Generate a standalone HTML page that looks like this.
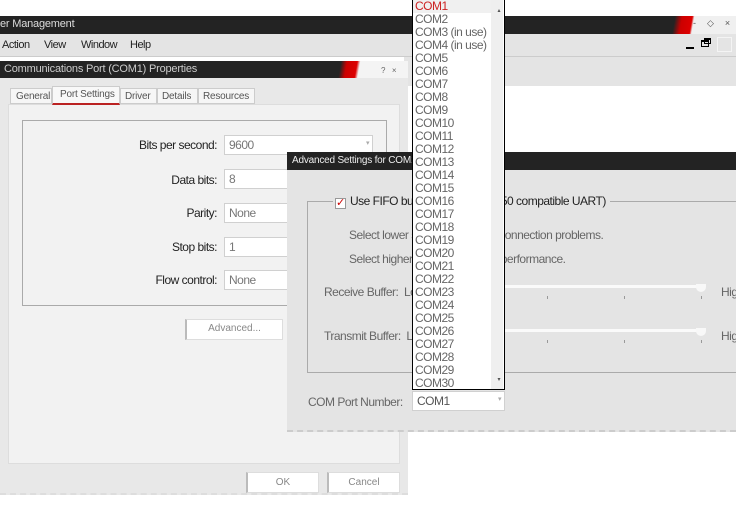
<!DOCTYPE html>
<html><head><style>
*{margin:0;padding:0;box-sizing:border-box}
body{width:736px;height:505px;background:#fff;position:relative;overflow:hidden;font-family:"Liberation Sans",sans-serif;font-size:12px;letter-spacing:-0.5px;color:#222}
.a{position:absolute}
.tb{background:#232323;color:#ddd;font-size:11px;letter-spacing:-0.2px}
.fld{position:absolute;background:#fff;border:1px solid #d0d0d0;color:#777;padding:2px 4px;height:20px;font-size:12px}
.lbl{position:absolute;text-align:right;font-size:12px;color:#222}
.btn{position:absolute;background:#fff;border:1px solid #ddd;border-left:2px solid #bbb;text-align:center;color:#888;font-size:10px;line-height:18px;letter-spacing:0}
.g{color:#666}
.tab{position:absolute;top:88px;height:16px;background:#f6f6f6;border:1px solid #ccc;font-size:10px;color:#555;padding:2px 0 0 4px;letter-spacing:-0.2px}
</style></head><body>
<!-- main window -->
<div class="a tb" style="left:0;top:16px;width:736px;height:18px;background:linear-gradient(100deg,#232323 0,#232323 665px,#c00 672px,#d00 682px,#f0f0f0 684px);padding:2px 0 0 0">er Management</div>
<div class="a" style="left:693px;top:18px;font-size:9px;color:#555;letter-spacing:11px">-◇×</div>
<div class="a" style="left:0;top:34px;width:736px;height:23px;background:#e4e4e4;border-bottom:1px solid #ccc"></div>
<div class="a" style="left:2px;top:39px;font-size:11px">Action</div>
<div class="a" style="left:44px;top:39px;font-size:11px">View</div>
<div class="a" style="left:81px;top:39px;font-size:11px">Window</div>
<div class="a" style="left:130px;top:39px;font-size:11px">Help</div>
<div class="a" style="left:686px;top:47px;width:8px;height:2px;background:#000"></div>
<div class="a" style="left:701px;top:40px;width:8px;height:7px;border:1px solid #000;border-top-width:2px"></div>
<div class="a" style="left:704px;top:38px;width:7px;height:6px;border:1px solid #000;border-top-width:2px"></div>
<div class="a" style="left:717px;top:37px;width:15px;height:15px;border:1px solid #f4f4f4"></div>
<div class="a" style="left:404px;top:57px;width:332px;height:29px;background:#e4e4e4"></div>
<!-- properties dialog -->
<div class="a" style="left:0;top:61px;width:408px;height:434px;background:#e8e8e8;border-bottom:2px dashed #ddd"></div>
<div class="a tb" style="left:0;top:61px;width:408px;height:17px;background:linear-gradient(100deg,#232323 0,#232323 336px,#c00 342px,#d00 352px,#f4f4f4 355px);padding:2px 0 0 4px;color:#ccc">Communications Port (COM1) Properties</div>
<div class="a" style="left:381px;top:66px;font-size:8px;color:#666">?&nbsp;&nbsp;&nbsp;&nbsp;×</div>
<div class="a" style="left:8px;top:104px;width:392px;height:360px;background:#f2f2f2;border:1px solid #ddd"></div>
<div class="tab" style="left:10px;width:42px;padding-left:5px">General</div>
<div class="tab" style="left:52px;top:86px;width:68px;height:19px;background:#f8f8f8;border-bottom:2px solid #b22;padding-left:7px">Port Settings</div>
<div class="tab" style="left:120px;width:37px">Driver</div>
<div class="tab" style="left:157px;width:41px">Details</div>
<div class="tab" style="left:198px;width:57px">Resources</div>
<div class="a" style="left:22px;top:120px;width:365px;height:186px;border:1px solid #aaa"></div>
<div class="lbl" style="left:60px;top:138px;width:157px">Bits per second:</div>
<div class="lbl" style="left:60px;top:173px;width:157px">Data bits:</div>
<div class="lbl" style="left:60px;top:206px;width:157px">Parity:</div>
<div class="lbl" style="left:60px;top:240px;width:157px">Stop bits:</div>
<div class="lbl" style="left:60px;top:273px;width:157px">Flow control:</div>
<div class="fld" style="left:224px;top:135px;width:149px">9600<span style="position:absolute;right:3px;top:3px;font-size:7px;color:#aaa">▾</span></div>
<div class="fld" style="left:224px;top:169px;width:70px">8</div>
<div class="fld" style="left:224px;top:203px;width:70px">None</div>
<div class="fld" style="left:224px;top:237px;width:70px">1</div>
<div class="fld" style="left:224px;top:270px;width:70px">None</div>
<div class="btn" style="left:185px;top:319px;width:98px;height:21px">Advanced...</div>
<div class="btn" style="left:246px;top:472px;width:73px;height:21px;line-height:19px">OK</div>
<div class="btn" style="left:327px;top:472px;width:73px;height:21px;line-height:19px">Cancel</div>
<!-- advanced dialog -->
<div class="a" style="left:287px;top:152px;width:449px;height:280px;background:#e4e4e4;border-bottom:2px dashed #ccc"></div>
<div class="a tb" style="left:287px;top:152px;width:449px;height:18px;padding:3px 0 0 5px;font-size:10px;color:#eee">Advanced Settings for COM1</div>
<div class="a" style="left:307px;top:201px;width:440px;height:172px;border:1px solid #aaa"></div>
<div class="a" style="left:333px;top:194px;background:#e4e4e4;padding:0 4px 0 2px;font-size:12px;color:#222"><span style="display:inline-block;width:11px;height:11px;border:1px solid #999;background:#fff;color:#c00;font-size:11px;line-height:9px;vertical-align:-1px;margin-right:4px;letter-spacing:0">✓</span>Use FIFO buffers (requires 16550 compatible UART)</div>
<div class="a g" style="left:349px;top:228px">Select lower settings to correct connection problems.</div>
<div class="a g" style="left:349px;top:252px">Select higher settings for faster performance.</div>
<div class="a g" style="left:324px;top:285px">Receive Buffer:&nbsp; Low</div>
<div class="a g" style="left:721px;top:285px">High</div>
<div class="a g" style="left:324px;top:329px">Transmit Buffer:&nbsp; Low</div>
<div class="a g" style="left:721px;top:329px">High</div>
<div class="a" style="left:430px;top:285px;width:275px;height:3px;background:#fafafa"></div>
<div class="a" style="left:430px;top:329px;width:275px;height:3px;background:#fafafa"></div>
<div class="a" style="left:696px;top:284px;width:10px;height:8px;background:#f8f8f8;border-radius:0 0 5px 5px"></div>
<div class="a" style="left:696px;top:328px;width:10px;height:8px;background:#f8f8f8;border-radius:0 0 5px 5px"></div>
<div class="a" style="left:547px;top:296px;width:1px;height:3px;background:#999"></div>
<div class="a" style="left:624px;top:296px;width:1px;height:3px;background:#999"></div>
<div class="a" style="left:701px;top:296px;width:1px;height:3px;background:#999"></div>
<div class="a" style="left:547px;top:340px;width:1px;height:3px;background:#999"></div>
<div class="a" style="left:624px;top:340px;width:1px;height:3px;background:#999"></div>
<div class="a" style="left:701px;top:340px;width:1px;height:3px;background:#999"></div>
<div class="a g" style="left:308px;top:395px">COM Port Number:</div>
<div class="fld" style="left:412px;top:391px;width:93px;height:20px;color:#555">COM1<span style="position:absolute;right:3px;top:3px;font-size:7px;color:#aaa">▾</span></div>
<!-- dropdown list -->
<div class="a" style="left:412px;top:-1px;width:93px;height:391px;background:#fff;border:1px solid #000;overflow:hidden;font-size:12px;line-height:13px;color:#666;padding-left:2px">
<div style="position:absolute;right:1px;top:0;width:12px;height:389px;background:#efefef"></div>
<div style="position:absolute;right:4px;top:5px;font-size:6px;color:#555">▴</div>
<div style="position:absolute;right:4px;top:374px;font-size:6px;color:#555">▾</div>
<div style="color:#c22;background:#f0f0f0;width:78px;margin-left:-2px;padding-left:2px">COM1</div>
<div>COM2</div><div>COM3 (in use)</div><div>COM4 (in use)</div><div>COM5</div><div>COM6</div><div>COM7</div><div>COM8</div><div>COM9</div><div>COM10</div><div>COM11</div><div>COM12</div><div>COM13</div><div>COM14</div><div>COM15</div><div>COM16</div><div>COM17</div><div>COM18</div><div>COM19</div><div>COM20</div><div>COM21</div><div>COM22</div><div>COM23</div><div>COM24</div><div>COM25</div><div>COM26</div><div>COM27</div><div>COM28</div><div>COM29</div><div>COM30</div>
</div>
</body></html>
